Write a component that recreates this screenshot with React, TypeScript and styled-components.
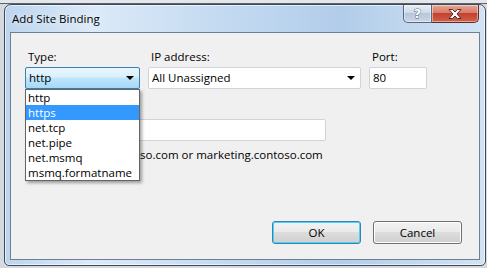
import React from 'react';
import styled, { createGlobalStyle } from 'styled-components';

const GlobalStyle = createGlobalStyle`
    html, body {
        margin: 0;
        padding: 0;
        background: #cdd2d8;
        font-family: "Open Sans", "Noto Sans", "DejaVu Sans", sans-serif;
        font-size: 11.5px;
        color: #000;
    }
`;

const Desktop = styled.div`
    width: 487px;
    height: 268px;
    padding: 4px 1px 2px 4px;
    box-sizing: border-box;
    background: linear-gradient(#e4e6e9 0, #e4e6e9 3px, #5a6470 3px, #5a6470 4px, #d6dadf 4px);
`;

const Window = styled.div`
    width: 482px;
    height: 262px;
    box-sizing: border-box;
    border: 1px solid #3c4a5c;
    border-radius: 7px 7px 5px 5px;
    background: linear-gradient(90deg, #bcd4ee 0%, #dceaf8 18%, #c4daf1 45%, #b2cdea 70%, #d2e3f4 100%);
    box-shadow: inset 0 0 0 1px rgba(255, 255, 255, 0.6);
    display: flex;
    flex-direction: column;
    padding: 0 5px 5px 5px;
`;

const TitleBar = styled.div`
    height: 27px;
    display: flex;
    align-items: flex-start;
    justify-content: space-between;
`;

const Title = styled.div`
    padding: 6px 0 0 2px;
    line-height: 16px;
    font-size: 11.5px;
    color: #000;
    text-shadow: 0 0 6px rgba(255, 255, 255, 0.9);
`;

const Caption = styled.div`
    display: flex;
    margin-right: 1px;
`;

const CaptionButton = styled.div<{ $close?: boolean }>`
    width: ${p => (p.$close ? '47px' : '29px')};
    height: 18px;
    box-sizing: border-box;
    border: 1px solid ${p => (p.$close ? '#5a2c2c' : '#56677e')};
    border-top: none;
    border-radius: ${p => (p.$close ? '0 0 5px 0' : '0 0 0 5px')};
    border-left: ${p => (p.$close ? 'none' : '1px solid #56677e')};
    background: ${p =>
        p.$close
            ? 'linear-gradient(#e8a493 0%, #d77d6a 45%, #c4422f 50%, #d0604a 100%)'
            : 'linear-gradient(#e6edf5 0%, #cfdbe9 45%, #b6c7db 50%, #c9d7e7 100%)'};
    display: flex;
    align-items: center;
    justify-content: center;
    box-shadow: inset 0 0 0 1px rgba(255, 255, 255, 0.45);
`;

const HelpGlyph = styled.span`
    font-family: "DejaVu Sans", sans-serif;
    font-weight: bold;
    font-size: 13px;
    line-height: 13px;
    color: #fff;
    -webkit-text-stroke: 0.8px #4a5566;
    paint-order: stroke fill;
`;

const Client = styled.div`
    flex: 1;
    border: 1px solid #6e7f94;
    background: #f0f0f0;
    display: flex;
    flex-direction: column;
    padding: 16px 0 0 14px;
`;

const FieldRow = styled.div`
    display: flex;
    gap: 8px;
`;

const Field = styled.div<{ $w: number }>`
    position: relative;
    width: ${p => p.$w}px;
    display: flex;
    flex-direction: column;
`;

const Label = styled.div`
    line-height: 16px;
    padding-left: 3px;
    margin-bottom: 2px;
`;

const Box = styled.div<{ $w?: number }>`
    height: 22px;
    width: ${p => (p.$w ? `${p.$w}px` : 'auto')};
    box-sizing: border-box;
    border: 1px solid #d0d4d9;
    border-radius: 2px;
    background: #fff;
    display: flex;
    align-items: center;
    padding: 0 3px;
    line-height: 16px;
`;

const OpenCombo = styled(Box)`
    border: 1px solid #3c7fb1;
    background: linear-gradient(#eaf6fd 0%, #d9f0fc 45%, #bee6fd 50%, #a7d9f5 100%);
`;

const ComboText = styled.span`
    flex: 1;
`;

const Arrow = styled.span`
    width: 0;
    height: 0;
    border-left: 4px solid transparent;
    border-right: 4px solid transparent;
    border-top: 4px solid #000;
    margin-right: 2px;
`;

const DropList = styled.div`
    position: absolute;
    left: 0;
    top: 40px;
    width: 115px;
    box-sizing: border-box;
    border: 1px solid #646464;
    background: #fff;
    box-shadow: 2px 2px 3px rgba(0, 0, 0, 0.35);
    z-index: 2;
`;

const DropItem = styled.div<{ $selected?: boolean }>`
    height: 15px;
    line-height: 15px;
    padding-left: 2px;
    background: ${p => (p.$selected ? '#3399ff' : 'transparent')};
    color: ${p => (p.$selected ? '#fff' : '#000')};
`;

const HostSection = styled.div`
    margin-top: 12px;
    display: flex;
    flex-direction: column;
`;

const Hint = styled.div`
    line-height: 16px;
    padding-left: 3px;
    margin-top: 6px;
`;

const Buttons = styled.div`
    margin-top: auto;
    display: flex;
    justify-content: flex-end;
    gap: 12px;
    padding: 0 17px 15px 0;
`;

const DialogButton = styled.div<{ $default?: boolean }>`
    width: 89px;
    height: 23px;
    box-sizing: border-box;
    border: 1px solid ${p => (p.$default ? '#3c7fb1' : '#707070')};
    border-radius: 3px;
    background: linear-gradient(#f2f2f2 0%, #ebebeb 45%, #dddddd 50%, #cfcfcf 100%);
    box-shadow: ${p => (p.$default ? 'inset 0 0 0 1px #48d4fb' : 'inset 0 0 0 1px #fcfcfc')};
    display: flex;
    align-items: center;
    justify-content: center;
    line-height: 16px;
`;

const types = ['http', 'https', 'net.tcp', 'net.pipe', 'net.msmq', 'msmq.formatname'];

const App = () => {
    return (
        <Desktop>
            <GlobalStyle />
            <Window>
                <TitleBar>
                    <Title>Add Site Binding</Title>
                    <Caption>
                        <CaptionButton>
                            <HelpGlyph>?</HelpGlyph>
                        </CaptionButton>
                        <CaptionButton $close>
                            <svg width="16" height="12" viewBox="0 0 16 12">
                                <path
                                    d="M2 1.5 L5.5 1.5 L8 4 L10.5 1.5 L14 1.5 L10 6 L14 10.5 L10.5 10.5 L8 8 L5.5 10.5 L2 10.5 L6 6 Z"
                                    fill="#fff"
                                    stroke="#5b2a25"
                                    strokeWidth="1"
                                    strokeLinejoin="round"
                                />
                            </svg>
                        </CaptionButton>
                    </Caption>
                </TitleBar>
                <Client>
                    <FieldRow>
                        <Field $w={115}>
                            <Label>Type:</Label>
                            <OpenCombo>
                                <ComboText>http</ComboText>
                                <Arrow />
                            </OpenCombo>
                            <DropList>
                                {types.map(t => (
                                    <DropItem key={t} $selected={t === 'https'}>{t}</DropItem>
                                ))}
                            </DropList>
                        </Field>
                        <Field $w={213}>
                            <Label>IP address:</Label>
                            <Box>
                                <ComboText>All Unassigned</ComboText>
                                <Arrow />
                            </Box>
                        </Field>
                        <Field $w={58}>
                            <Label>Port:</Label>
                            <Box>80</Box>
                        </Field>
                    </FieldRow>
                    <HostSection>
                        <Label>Host name:</Label>
                        <Box $w={301} />
                        <Hint>Example: www.contoso.com or marketing.contoso.com</Hint>
                    </HostSection>
                    <Buttons>
                        <DialogButton $default>OK</DialogButton>
                        <DialogButton>Cancel</DialogButton>
                    </Buttons>
                </Client>
            </Window>
        </Desktop>
    );
};

export default App;
